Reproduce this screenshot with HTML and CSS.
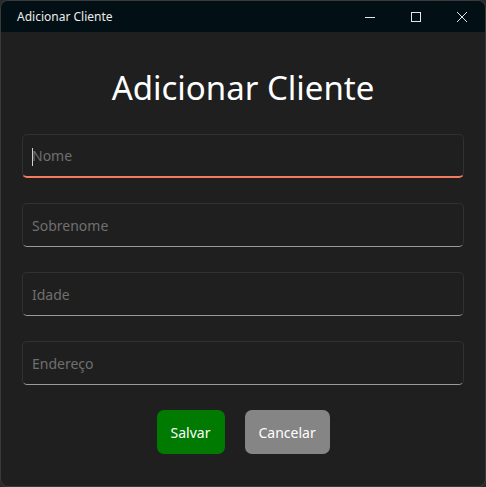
FILE: index.html
```html
<!DOCTYPE html>
<html lang="pt">
<head>
<meta charset="utf-8">
<title>Adicionar Cliente</title>
<link rel="stylesheet" href="styles.css">
</head>
<body>
<div class="window">
  <div class="titlebar">
    <span class="title">Adicionar Cliente</span>
    <div class="controls">
      <span class="ctl">
        <svg width="12" height="12" viewBox="0 0 12 12"><path d="M1 6.5h10" stroke="#e6e6e6" stroke-width="1" fill="none"/></svg>
      </span>
      <span class="ctl">
        <svg width="12" height="12" viewBox="0 0 12 12"><rect x="1.5" y="1.5" width="9" height="9" stroke="#e6e6e6" stroke-width="1" fill="none"/></svg>
      </span>
      <span class="ctl">
        <svg width="12" height="12" viewBox="0 0 12 12"><path d="M1 1L11 11M11 1L1 11" stroke="#e6e6e6" stroke-width="1" fill="none"/></svg>
      </span>
    </div>
  </div>
  <div class="content">
    <h1 class="heading">Adicionar Cliente</h1>
    <div class="form">
      <div class="field focused"><span class="caret"></span><span class="ph">Nome</span></div>
      <div class="field"><span class="ph">Sobrenome</span></div>
      <div class="field"><span class="ph">Idade</span></div>
      <div class="field"><span class="ph">Endereço</span></div>
    </div>
    <div class="buttons">
      <button class="btn save">Salvar</button>
      <button class="btn cancel">Cancelar</button>
    </div>
  </div>
</div>
</body>
</html>
```
FILE: styles.css
```css
html, body {
  margin: 0;
  padding: 0;
  background: #2a2a2a;
}
body {
  width: 486px;
  height: 487px;
  font-family: "Noto Sans", "Open Sans", sans-serif;
}
.window {
  box-sizing: border-box;
  width: 486px;
  height: 487px;
  border: 1px solid #3a3a3a;
  border-radius: 8px;
  background: #1f1f1f;
  overflow: hidden;
  display: flex;
  flex-direction: column;
}
.titlebar {
  height: 31px;
  background: #020f15;
  display: flex;
  align-items: center;
  justify-content: space-between;
  flex-shrink: 0;
}
.title {
  color: #ececec;
  font-size: 12px;
  padding-left: 16px;
  padding-bottom: 1px;
}
.controls {
  display: flex;
  height: 100%;
}
.ctl {
  width: 46px;
  display: flex;
  align-items: center;
  justify-content: center;
}
.content {
  display: flex;
  flex-direction: column;
  padding: 0 21px;
}
.heading {
  margin: 33px 0 0;
  height: 69px;
  font-size: 33px;
  font-weight: 400;
  color: #ffffff;
  text-align: center;
  line-height: 46px;
}
.form {
  display: flex;
  flex-direction: column;
  gap: 25px;
}
.field {
  box-sizing: border-box;
  height: 44px;
  border: 1px solid #313131;
  border-bottom: 1px solid #9a9a9a;
  border-radius: 5px;
  background: #1f1f1f;
  display: flex;
  align-items: center;
  padding-left: 9px;
  position: relative;
}
.field.focused {
  border-bottom: 2px solid #f47b5e;
}
.ph {
  color: #6f6f6f;
  font-size: 14px;
}
.caret {
  position: absolute;
  left: 9px;
  top: 13px;
  width: 1px;
  height: 18px;
  background: #d0d0d0;
}
.buttons {
  display: flex;
  justify-content: center;
  gap: 20px;
  margin-top: 25px;
}
.btn {
  height: 44px;
  border: none;
  border-radius: 7px;
  color: #ffffff;
  font-family: "Noto Sans", "Open Sans", sans-serif;
  font-size: 14px;
  padding: 0 14px;
}
.save {
  background: #007a00;
  width: 68px;
}
.cancel {
  background: #858585;
  width: 85px;
}
```
